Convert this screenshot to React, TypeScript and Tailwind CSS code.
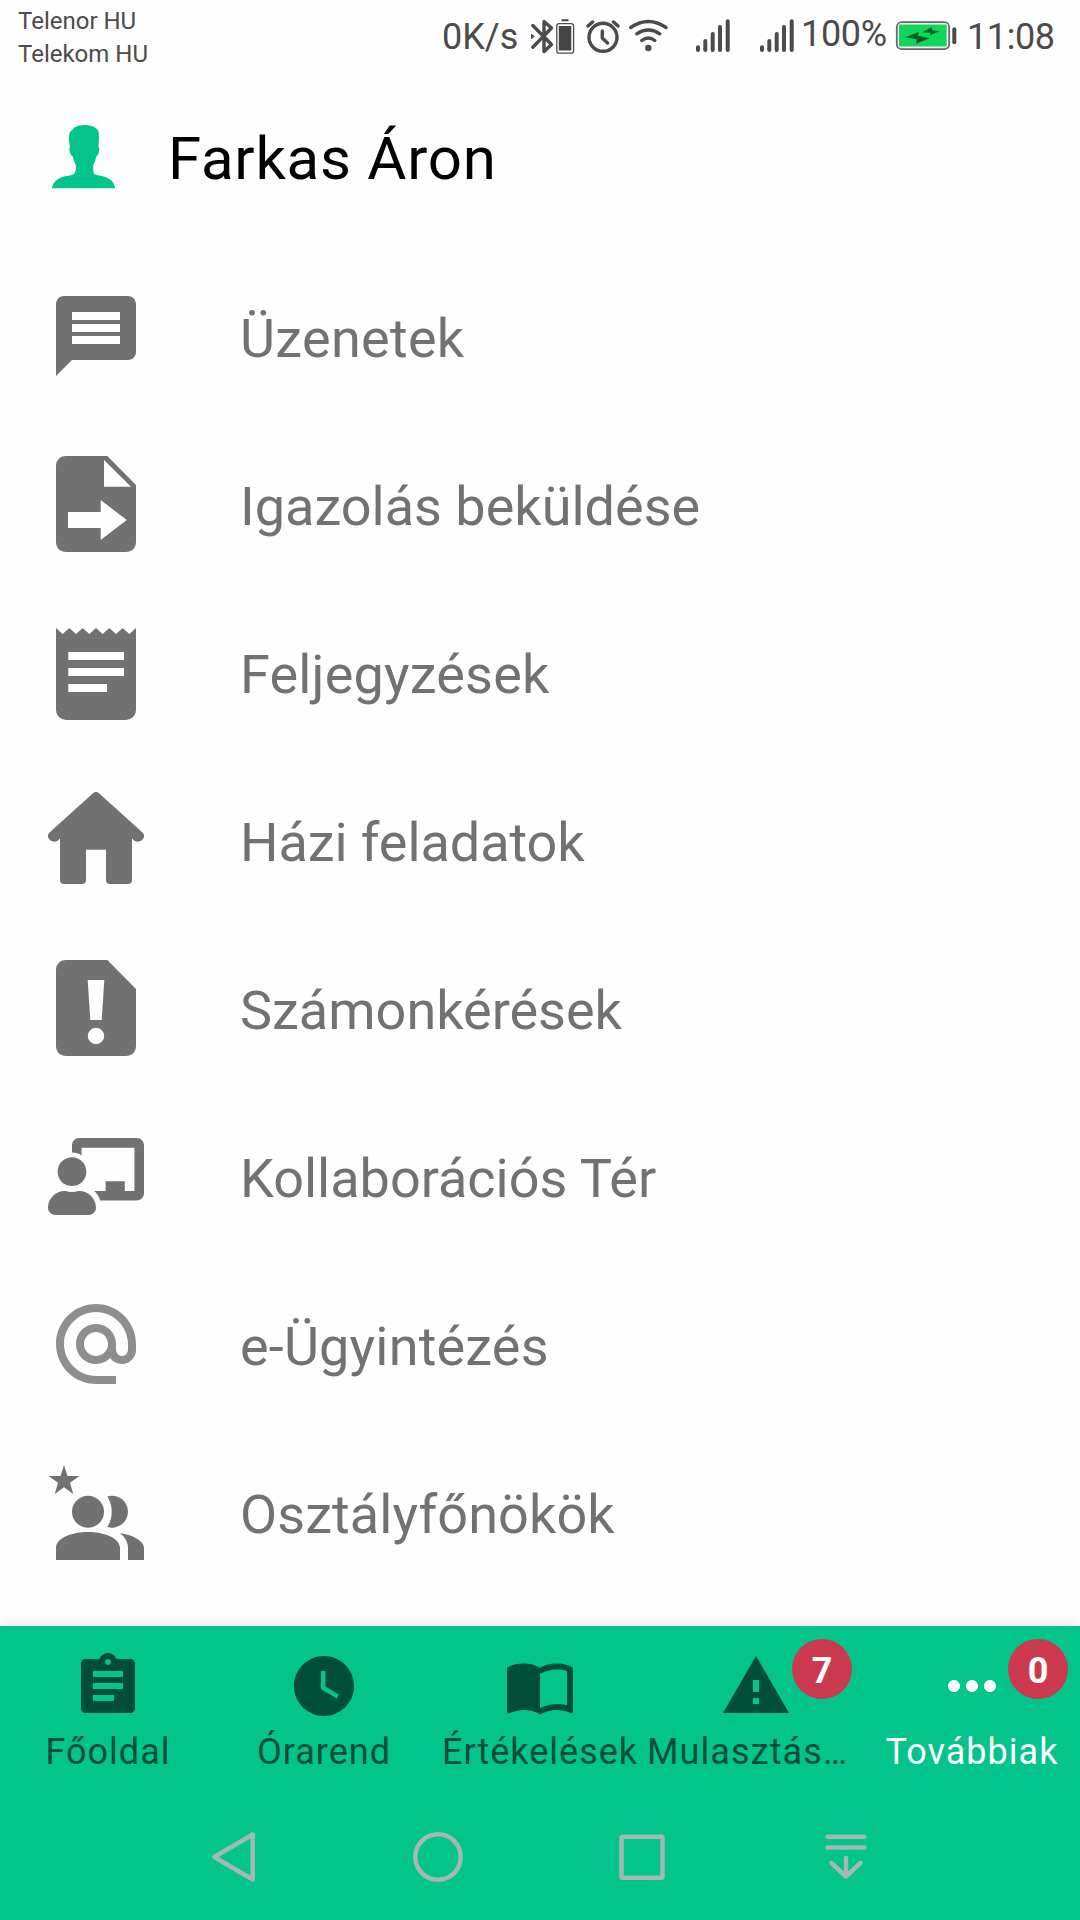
import React from "react";
import { FaChalkboardTeacher } from "react-icons/fa";

const gray = "#717171";

function Glyph({ children, fill = gray }: { children: React.ReactNode; fill?: string }) {
  return (
    <svg className="block size-24 shrink-0 overflow-visible" viewBox="0 0 96 96" fill={fill} fillRule="evenodd">
      {children}
    </svg>
  );
}

const items: { label: string; tracking?: string; icon: React.ReactNode }[] = [
  {
    label: "Üzenetek",
    tracking: "tracking-[0.3px]",
    icon: (
      <Glyph>
        <path d="M80 8H16c-4.400 0-8 3.600-8 8v72l16-16h56c4.400 0 8-3.600 8-8V16c0-4.400-3.600-8-8-8zM24 24h48v8H24zM24 36h48v8H24zM24 48h48v8H24z" />
      </Glyph>
    ),
  },
  {
    label: "Igazolás beküldése",
    icon: (
      <Glyph>
        <path d="M17.500 0H59.300L88 29V86.500a9.500 9.500 0 0 1-9.500 9.500H17.500A9.500 9.500 0 0 1 8 86.500V9.500A9.500 9.500 0 0 1 17.500 0zM56 4V30.700H83zM20 56V72H52.700V84L78.700 64L52.700 44V56z" />
      </Glyph>
    ),
  },
  {
    label: "Feljegyzések",
    tracking: "tracking-[0.18px]",
    icon: (
      <Glyph>
        <path d="M8 4l6.670 6L21.330 4L28 10L34.670 4L41.330 10L48 4L54.670 10L61.330 4L68 10L74.670 4L81.330 10L88 4V86a10 10 0 0 1-10 10H18A10 10 0 0 1 8 86zM20.300 28V36H76V28zM20.300 44V52H76V44zM20.300 60V68H59V60z" />
      </Glyph>
    ),
  },
  {
    label: "Házi feladatok",
    tracking: "tracking-[-0.08px]",
    icon: (
      <Glyph>
        <path d="M45 1.200Q48-1.200 51 1.200L94.500 40.500Q97.500 43.500 95 47Q91 51.500 86 48.500L84 46.500V88Q84 92 80 92H62Q58 92 58 88V57.700H38V88Q38 92 34 92H16Q12 92 12 88V46.500L10 48.500Q5 51.500 1 47Q-1.500 43.500 1.500 40.500Z" />
      </Glyph>
    ),
  },
  {
    label: "Számonkérések",
    icon: (
      <Glyph>
        <path d="M17.500 0H59.300L88 29V86.500a9.500 9.500 0 0 1-9.500 9.500H17.500A9.500 9.500 0 0 1 8 86.500V9.500A9.500 9.500 0 0 1 17.500 0zM39.700 20L42.300 60H53.700L56.300 20zM48 67.800a8.200 8.200 0 1 0 0 16.400a8.200 8.200 0 0 0 0-16.400z" />
      </Glyph>
    ),
  },
  {
    label: "Kollaborációs Tér",
    icon: <FaChalkboardTeacher className="h-[77px] w-24 shrink-0 text-[#717171]" />,
  },
  {
    label: "e-Ügyintézés",
    tracking: "tracking-[0.18px]",
    icon: (
      <Glyph fill="#8e8e8e">
        <path
          transform="scale(4)"
          d="M12 2C6.480 2 2 6.480 2 12s4.480 10 10 10h5v-2h-5c-4.340 0-8-3.660-8-8s3.660-8 8-8 8 3.660 8 8v1.430c0 .79-.71 1.570-1.500 1.570s-1.500-.78-1.500-1.570V12c0-2.760-2.240-5-5-5s-5 2.240-5 5 2.240 5 5 5c1.380 0 2.640-.56 3.540-1.470.65.89 1.770 1.470 2.960 1.470 1.970 0 3.500-1.600 3.500-3.570V12c0-5.520-4.480-10-10-10zm0 13c-1.660 0-3-1.340-3-3s1.340-3 3-3 3 1.340 3 3-1.340 3-3 3z"
        />
      </Glyph>
    ),
  },
  {
    label: "Osztályfőnökök",
    tracking: "tracking-[0.08px]",
    icon: (
      <Glyph>
        <path d="M16 1L19.500 12H31.300L22 18.800L25.300 30L16 23.200L6.700 30L10 18.800L.5 12H12.500z" />
        <circle cx="40" cy="47.700" r="16" />
        <path d="M59.300 32.400A16 16 0 1 1 59.300 63Q63.700 56 63.700 47.700T59.300 32.400zM8 96V84C8 74 24 68 40 68S72 74 72 84V96zM72 69.300C84 70.500 96 77 96 84V96H80V84C80 78 77 73 72 69.300z" />
      </Glyph>
    ),
  },
];

function Signal() {
  return (
    <svg className="block h-20 w-9 shrink-0" viewBox="695 0 36 80" stroke="#4b4b4b" strokeWidth="4" strokeLinecap="round">
      <path d="M698 47.300V50M705.300 41V50M712.700 34V50M720 27V50M727.700 21.300V50" />
    </svg>
  );
}

function StatusBar() {
  return (
    <div className="flex h-20 text-[#4b4b4b]">
      <div className="w-[442px] pt-[5px] pl-[18px] text-[24px] leading-[33px]">
        <div>Telenor HU</div>
        <div>Telekom HU</div>
      </div>
      <div className="w-[88px] pt-[16px] text-[36px] leading-[42px] whitespace-nowrap">0K/s</div>
      <svg className="block h-20 w-[46px] shrink-0" viewBox="530 0 46 80" fill="none" stroke="#4b4b4b">
        <path d="M532.800 25.500L551.500 44.500L544 51.500V21.500L551.500 28L532.800 47.200" strokeWidth="3.400" strokeLinecap="round" strokeLinejoin="round" />
        <path d="M531 33.500L535 36.300L531 39.200z" fill="#4b4b4b" stroke="none" />
        <rect x="556.800" y="23.600" width="16.800" height="29.600" rx="2.500" strokeWidth="1.300" />
        <path d="M558.800 26H571.300V50.500H558.800zM561.500 19.200H568.500V21.300H561.500z" fill="#444" stroke="none" />
      </svg>
      <svg className="ml-2.5 block h-20 w-[84px] shrink-0" viewBox="586 0 84 80" fill="none" stroke="#4b4b4b" strokeWidth="3.400" strokeLinecap="round" strokeLinejoin="round">
        <circle cx="603" cy="37.300" r="14" />
        <path d="M602.300 31V38L607.500 43M588 26L592.500 22M613.500 22L618 26" />
        <path d="M630.700 27.500Q648.300 15.500 666 27.500M636.800 33.800Q648.300 26.300 659.800 33.800M641.800 40.500Q648.300 35.500 654.800 40.500" />
        <circle cx="648.300" cy="48" r="3.200" fill="#4b4b4b" stroke="none" />
      </svg>
      <div className="ml-[25px]">
        <Signal />
      </div>
      <div className="ml-7">
        <Signal />
      </div>
      <div className="ml-[6px] w-[94px] pt-[13px] text-[36px] leading-[42px] tracking-[-0.3px]">100%</div>
      <svg className="block h-20 w-[63px] shrink-0" viewBox="895 0 63 80">
        <rect x="896.800" y="22.200" width="52.400" height="27" rx="5" fill="none" stroke="#686868" strokeWidth="1.800" />
        <path d="M899 24.500H946.700V46.500H899z" fill="#0fd65c" />
        <rect x="952.300" y="27.300" width="4" height="17" rx="2" fill="#4b4b4b" />
        <path d="M905.700 37.300L918.700 32L918 35.700L929.700 38.300L916 43.700L916.700 39.300zM922.300 32.300L931.700 27.300L932 30.300L939.300 31.300L930 35.300L930.700 32.700z" fill="#075a20" />
      </svg>
      <div className="ml-[9px] pt-[16px] text-[36px] leading-[42px] tracking-[-0.4px]">11:08</div>
    </div>
  );
}

const tabs = [
  {
    label: "Főoldal",
    d: "M19.500 3h-4.680C14.400 1.840 13.300 1 12 1c-1.300 0-2.400.84-2.820 2H4.500C3.700 3 3 3.700 3 4.500v15c0 .8.7 1.500 1.500 1.500h15c.8 0 1.500-.7 1.500-1.500v-15c0-.8-.7-1.500-1.500-1.500zM12 3c.55 0 1 .45 1 1s-.45 1-1 1-1-.45-1-1 .45-1 1-1zm2 14H7v-2h7v2zm3-4H7v-2h10v2zm0-4H7V7h10v2z",
  },
  {
    label: "Órarend",
    d: "M12 2C6.500 2 2 6.500 2 12s4.500 10 10 10 10-4.500 10-10S17.500 2 12 2zm4.200 14.200L11 13V7h1.500v5.200l4.500 2.700-.8 1.300z",
  },
  {
    label: "Értékelések",
    d: "M21 5c-1.110-.35-2.330-.5-3.500-.5-1.950 0-4.050.4-5.500 1.500-1.450-1.100-3.550-1.500-5.500-1.500S2.450 4.900 1 6v14.650c0 .25.25.5.5.5.1 0 .15-.05.25-.05C3.100 20.450 5.050 20 6.500 20c1.950 0 4.050.4 5.500 1.500 1.350-.85 3.800-1.500 5.500-1.500 1.650 0 3.350.3 4.750 1.050.1.05.15.05.25.05.25 0 .5-.25.5-.5V6c-.6-.45-1.250-.75-2-1zm0 13.500c-1.100-.35-2.300-.5-3.500-.5-1.700 0-4.150.65-5.500 1.500V8c1.350-.85 3.800-1.500 5.500-1.500 1.200 0 2.400.15 3.500.5v11.500z",
  },
  {
    label: "Mulasztás…",
    truncated: true,
    badge: "7",
    d: "M1 21h22L12 2 1 21zm12-3h-2v-2h2v2zm0-4h-2v-4h2v4z",
  },
  {
    label: "Továbbiak",
    badge: "0",
    active: true,
    d: "M6 10c-1.100 0-2 .9-2 2s.9 2 2 2 2-.9 2-2-.9-2-2-2zm12 0c-1.100 0-2 .9-2 2s.9 2 2 2 2-.9 2-2-.9-2-2-2zm-6 0c-1.100 0-2 .9-2 2s.9 2 2 2 2-.9 2-2-.9-2-2-2z",
  },
];

export default function App() {
  return (
    <div className="flex h-[1920px] w-[1080px] flex-col overflow-hidden bg-[#fefefe] font-['Roboto',sans-serif]">
      <StatusBar />
      <header className="flex h-[172px] items-start pl-[52px]">
        <svg className="mt-11 block h-[66px] w-16 shrink-0" viewBox="52 128 64 68" preserveAspectRatio="none" fill="#03c48b">
          <path d="M52 194.200C52.500 189 56.500 184.500 62.500 182.500C67 181 71 181.500 74 179.500C76 177.500 76 173 75.800 170C74.500 167.500 73.300 164.500 72.800 161.300C70.500 160.500 69.300 156 69.400 152.700L70 151.500C69 147 68.700 142 69.500 137C71 134.500 73 133.500 74.500 131.500C78 129.500 82 128.800 86 129C91 129.300 95.500 131 98.300 135C99.300 140 99 146 98.400 151.500L99.300 153C99.200 157 98.300 160.500 96.300 161.300C95.700 164.500 94.800 167.500 93.300 170C93 173 93 177 94.500 179.500C97 181.300 101 181 105 182.500C111 184.500 114.800 189 115 194.200z" />
        </svg>
        <h1 className="mt-[43px] ml-[52px] text-[60px] leading-[72px] tracking-[0.75px] text-black">Farkas Áron</h1>
      </header>
      <main className="flex flex-1 flex-col">
        {items.map((it) => (
          <div key={it.label} className="flex h-[168px] shrink-0 items-center pl-12">
            {it.icon}
            <span className="mt-[5px] ml-24 text-[54px] leading-[64px] text-[#727272]">
              <span className={it.tracking}>{it.label}</span>
            </span>
          </div>
        ))}
      </main>
      <footer className="flex h-[294px] shrink-0 flex-col bg-[#03c48b] shadow-[0_0_12px_rgba(0,0,0,0.12)]">
        <nav className="grid h-[168px] grid-cols-5">
          {tabs.map((t) => (
            <div
              key={t.label}
              className={
                t.active
                  ? "relative flex flex-col items-center pt-6 text-white"
                  : "relative flex flex-col items-center pt-6 text-[#004e38]"
              }
            >
              <svg className="block size-[72px]" viewBox="0 0 24 24" fill="currentColor">
                <path d={t.d} />
              </svg>
              <span
                className={
                  t.truncated
                    ? "mt-[8px] -ml-px self-start text-[36px] leading-[44px] tracking-[1.1px] whitespace-nowrap"
                    : "mt-[8px] text-[36px] leading-[44px] tracking-[1px] whitespace-nowrap"
                }
              >
                {t.label}
              </span>
              {t.badge && (
                <span className="absolute top-[12.5px] left-36 flex size-[60px] items-center justify-center rounded-full bg-[#cb394f] pt-[5px] text-[36px] leading-none font-bold text-white">
                  {t.badge}
                </span>
              )}
            </div>
          ))}
        </nav>
        <div className="flex h-[126px] items-center pl-[210px]">
          <svg className="block h-[54px] w-[48px]" viewBox="210 1830 48 54" fill="none" stroke="#a3b8b2" strokeWidth="4.500" strokeLinejoin="round">
            <path d="M214.300 1857L252.700 1834.500V1879.500z" />
          </svg>
          <svg className="ml-[153px] block size-[54px]" viewBox="0 0 54 54" fill="none" stroke="#a3b8b2" strokeWidth="4.500">
            <circle cx="27" cy="27" r="22.700" />
          </svg>
          <svg className="ml-[150px] block size-[54px]" viewBox="0 0 54 54" fill="none" stroke="#a3b8b2" strokeWidth="4.500">
            <rect x="6.500" y="6.700" width="41" height="41" rx="1.500" />
          </svg>
          <svg className="ml-[150px] block size-[54px]" viewBox="819 1830 54 54" fill="none" stroke="#a3b8b2" strokeWidth="4.500" strokeLinecap="round">
            <path d="M827.500 1836.800H864.500M827.500 1847.600H864.500" />
            <path d="M846 1858V1876M831.500 1863L846 1876.500L860.500 1863" strokeLinejoin="round" />
          </svg>
        </div>
      </footer>
    </div>
  );
}
